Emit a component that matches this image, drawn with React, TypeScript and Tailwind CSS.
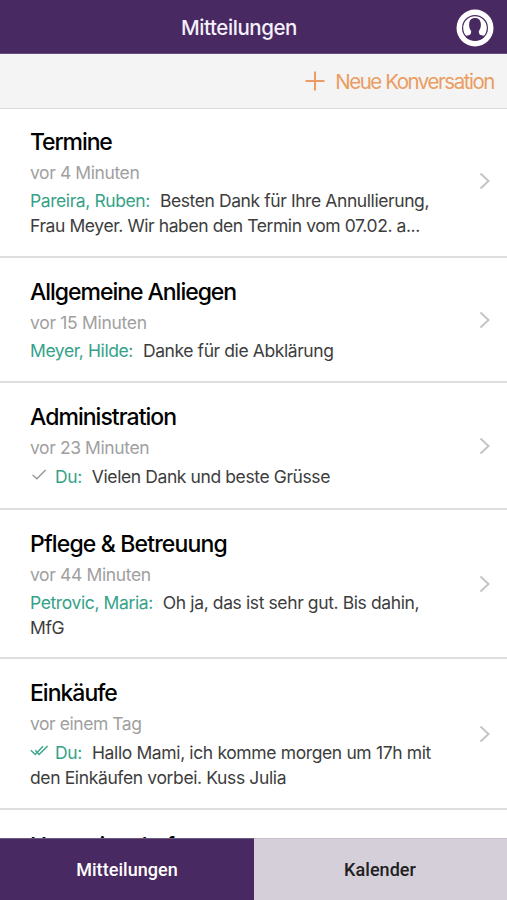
import type { ReactNode } from "react";

type Status = "sent" | "read";

interface Conversation {
  title: string;
  time: string;
  sender?: string;
  status?: Status;
  lines: string[];
  rowCls: string;
  titleCls: string;
  timeCls: string;
  bodyCls: string;
}

const CONVERSATIONS: Conversation[] = [
  {
    title: "Termine",
    time: "vor 4 Minuten",
    sender: "Pareira, Ruben:",
    lines: ["Besten Dank für Ihre Annullierung,", "Frau Meyer. Wir haben den Termin vom 07.02. a..."],
    rowCls: "h-[149px] pt-[18px] pb-[2px]",
    titleCls: "tracking-[-1.1px]",
    timeCls: "tracking-[-0.4px]",
    bodyCls: "tracking-[-0.41px]",
  },
  {
    title: "Allgemeine Anliegen",
    time: "vor 15 Minuten",
    sender: "Meyer, Hilde:",
    lines: ["Danke für die Abklärung"],
    rowCls: "h-[125px] pt-[19px]",
    titleCls: "tracking-[-1.03px]",
    timeCls: "tracking-[-0.3px]",
    bodyCls: "tracking-[-0.41px]",
  },
  {
    title: "Administration",
    time: "vor 23 Minuten",
    sender: "Du:",
    status: "sent",
    lines: ["Vielen Dank und beste Grüsse"],
    rowCls: "h-[127px] pt-[19px]",
    titleCls: "tracking-[-0.96px]",
    timeCls: "tracking-[-0.4px]",
    bodyCls: "mt-px tracking-[-0.4px]",
  },
  {
    title: "Pflege & Betreuung",
    time: "vor 44 Minuten",
    sender: "Petrovic, Maria:",
    lines: ["Oh ja, das ist sehr gut. Bis dahin,", "MfG"],
    rowCls: "h-[149px] pt-[19px]",
    titleCls: "tracking-[-0.84px]",
    timeCls: "tracking-[-0.37px]",
    bodyCls: "tracking-[-0.39px]",
  },
  {
    title: "Einkäufe",
    time: "vor einem Tag",
    sender: "Du:",
    status: "read",
    lines: ["Hallo Mami, ich komme morgen um 17h mit", "den Einkäufen vorbei. Kuss Julia"],
    rowCls: "h-[151px] pt-[19px]",
    titleCls: "tracking-[-1px]",
    timeCls: "tracking-[-0.45px]",
    bodyCls: "mt-px tracking-[-0.37px]",
  },
  {
    title: "Hauswirtschaft",
    time: "vor 2 Tagen",
    lines: [],
    rowCls: "h-[149px] pt-[21px]",
    titleCls: "tracking-[-1.2px]",
    timeCls: "tracking-[-0.4px]",
    bodyCls: "",
  },
];

function StatusIcon({ status }: { status: Status }) {
  return (
    <svg
      viewBox="0 0 18 14"
      fill="none"
      strokeWidth="1.5"
      className={
        status === "read"
          ? "mr-[7px] inline-block h-[14px] w-[18px] -translate-y-[3px] stroke-[#3fa68c]"
          : "mr-[7px] inline-block h-[14px] w-[18px] -translate-y-[3px] stroke-[#999999]"
      }
    >
      {status === "read" ? (
        <path d="M.8 6.300 5.300 10.500 13 2.300M5.300 6.300l3.800 4.200L17.600 2" />
      ) : (
        <path d="M2.600 7 6.900 10.700 15.600 2" />
      )}
    </svg>
  );
}

function Chevron() {
  return (
    <svg viewBox="0 0 12 18" fill="none" strokeWidth="2" className="h-[18px] w-3 shrink-0 stroke-[#c4c4c4]">
      <path d="M1.500 1.500 9.500 9 1.500 16.500" />
    </svg>
  );
}

function ProfileIcon() {
  return (
    <svg viewBox="0 0 38 38" className="h-[38px] w-[38px]">
      <circle cx="19" cy="19" r="18.500" fill="#fff" />
      <circle cx="19" cy="19" r="13" fill="#482961" />
      <circle cx="19" cy="19" r="11.800" fill="#fff" />
      <path
        d="M19 9c-4 0-5.900 2.700-5.900 6.500 0 2.900.8 5 2.100 6.500 0 2.200-.4 3.300-1.800 4-1.200.6-2.700.4-3.800 1a12.300 12.300 0 0 0 18.800 0c-1.100-.6-2.600-.4-3.800-1-1.400-.7-1.800-1.800-1.800-4 1.300-1.500 2.100-3.600 2.100-6.500C24.900 11.700 23 9 19 9Z"
        fill="#482961"
      />
    </svg>
  );
}

function Tab({ active, children }: { active?: boolean; children: ReactNode }) {
  return (
    <button
      type="button"
      className={
        active
          ? "flex w-[254px] items-center justify-center border-t border-[#6c5a80] bg-[#482961] pb-px text-white"
          : "flex flex-1 items-center justify-center border-t border-[#c4bfc8] bg-[#d5cfd9] pr-px pb-px text-[#212121]"
      }
    >
      {children}
    </button>
  );
}

export default function App() {
  return (
    <div className="flex h-[900px] w-[507px] flex-col overflow-hidden bg-white font-['Inter',sans-serif]">
      {/* Header */}
      <header className="flex h-[54px] shrink-0 items-center border-b border-[#66517a] bg-[#482961] pt-[3px] pr-[13px]">
        <h1 className="flex-1 pl-[22px] text-center text-[20.500px] font-medium tracking-[-0.450px] text-[#f4effa]">
          Mitteilungen
        </h1>
        <ProfileIcon />
      </header>

      {/* Action bar */}
      <div className="flex h-[55px] shrink-0 items-center justify-end gap-[10px] border-b border-[#dcdcdc] bg-[#f4f4f4] pr-[13px] text-[#eb9c62]">
        <svg viewBox="0 0 20 20" className="h-5 w-5" fill="none" stroke="currentColor" strokeWidth="2">
          <path d="M10 .5v19M.5 10h19" />
        </svg>
        <span className="pt-[2px] text-[20.500px] tracking-[-1.450px]">Neue Konversation</span>
      </div>

      {/* Conversations */}
      <main className="flex-1 overflow-hidden">
        {CONVERSATIONS.map((c) => (
          <div key={c.title} className={`flex border-b-2 border-[#dedede] pr-[16px] pl-[30px] ${c.rowCls}`}>
            <div className="flex-1 whitespace-nowrap">
              <h2 className={`text-[23px] leading-[30px] font-medium text-black ${c.titleCls}`}>{c.title}</h2>
              <p className={`mt-[3px] text-[17.500px] leading-[26px] text-[#a0a0a0] ${c.timeCls}`}>{c.time}</p>
              <div className={`pt-[3px] text-[17.500px] leading-[24.500px] text-[#3d3d3d] ${c.bodyCls}`}>
                {c.lines.map((line, i) => (
                  <p key={line}>
                    {i === 0 && c.status && <StatusIcon status={c.status} />}
                    {i === 0 && <span className="mr-[10px] text-[#35a287]">{c.sender}</span>}
                    {line}
                  </p>
                ))}
              </div>
            </div>
            <div className="-mt-[19px] flex items-center">
              <Chevron />
            </div>
          </div>
        ))}
      </main>

      {/* Tab bar */}
      <nav className="flex h-[62px] shrink-0 font-['Roboto',sans-serif] text-[18px] font-medium tracking-[0.05px]">
        <Tab active>Mitteilungen</Tab>
        <Tab>Kalender</Tab>
      </nav>
    </div>
  );
}
